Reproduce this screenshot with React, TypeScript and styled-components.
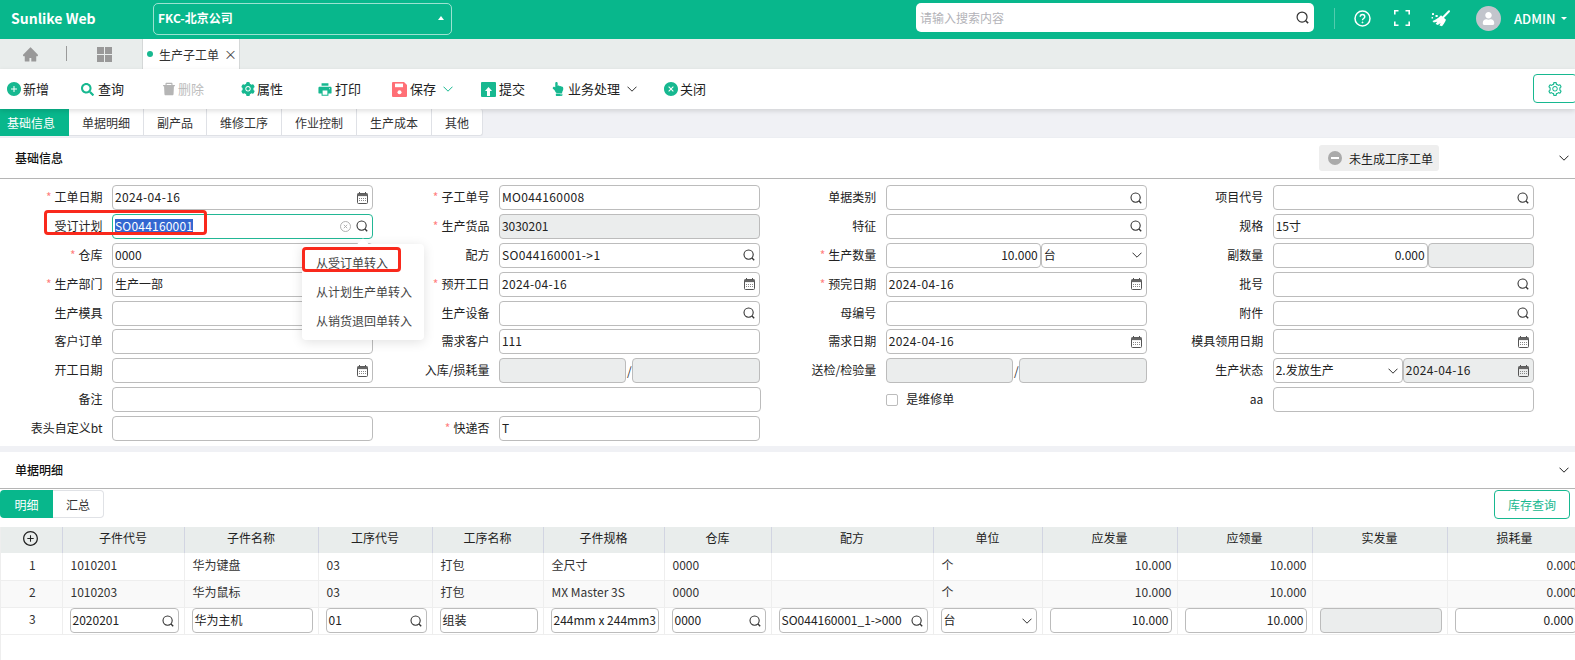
import React from "react";
import styled, { createGlobalStyle } from "styled-components";
import { AiFillHome, AiFillPlusCircle, AiFillDelete, AiFillSetting, AiFillPrinter, AiFillCloseCircle, AiOutlinePlusCircle, AiOutlineSetting } from "react-icons/ai";
import { FaHandPointUp, FaSearch, FaUser } from "react-icons/fa";

const TEAL = "#08b78c";
const ICON_TEAL = "#17b890";

const Global = createGlobalStyle`
  html, body { margin: 0; padding: 0; background: #fff; }
  body { font-family: "Noto Sans CJK SC", "Noto Sans", sans-serif; font-size: 12px; color: #222; }
  * { box-sizing: border-box; }
`;

const Page = styled.div`
  position: relative;
  width: 1575px;
  height: 660px;
  overflow: hidden;
  background: #fff;
`;

/* ---------- top bar ---------- */
const TopBar = styled.header`
  height: 39px;
  background: ${TEAL};
  display: flex;
  align-items: center;
  padding-left: 11px;
  color: #fff;
`;
const Brand = styled.div`
  width: 142px;
  font-size: 14px;
  font-weight: 700;
  line-height: 20px;
  margin-top: -3px;
`;
const Company = styled.div`
  width: 299px;
  height: 32px;
  margin-top: -2px;
  border: 1px solid rgba(255, 255, 255, 0.6);
  border-radius: 5px;
  display: flex;
  align-items: center;
  justify-content: space-between;
  padding: 0 7px 2px 4px;
  font-weight: 700;
  font-size: 12px;
`;
const CaretUp = styled.span`
  width: 0;
  height: 0;
  border-left: 3.5px solid transparent;
  border-right: 3.5px solid transparent;
  border-bottom: 4px solid #fff;
`;
const CaretDown = styled.span`
  width: 0;
  height: 0;
  border-left: 3px solid transparent;
  border-right: 3px solid transparent;
  border-top: 3.5px solid #fff;
  margin-left: 5px;
`;
const TopSearch = styled.div`
  width: 398px;
  height: 29px;
  margin: -4px 0 0 464px;
  background: #fff;
  border-radius: 5px;
  display: flex;
  align-items: center;
  justify-content: space-between;
  padding: 0 5px 0 4px;
  color: #b3b3b8;
  font-size: 12px;
`;
const TopDivider = styled.span`
  width: 1px;
  height: 21px;
  margin: -3px 8.5px 0 19.5px;
  background: rgba(255, 255, 255, 0.3);
`;
const TopSlot = styled.span`
  width: 39px;
  display: flex;
  justify-content: center;
  align-items: center;
  margin-top: -3px;
`;
const Avatar = styled.span`
  width: 25px;
  height: 25px;
  margin: -3px 0 0 16px;
  border-radius: 50%;
  background: #c2c5cc;
  display: flex;
  align-items: flex-end;
  justify-content: center;
  padding-bottom: 6px;
  color: #fff;
`;
const UserName = styled.span`
  margin: -3px 0 0 13px;
  font-size: 13px;
  font-weight: 500;
  display: flex;
  align-items: center;
`;

/* ---------- page tabs ---------- */
const PageTabs = styled.nav`
  height: 30px;
  background: #e9edec;
  display: flex;
  align-items: stretch;
`;
const HomeSlot = styled.span`
  width: 67px;
  display: flex;
  align-items: center;
  justify-content: center;
  padding-right: 7px;
  color: #999;
  position: relative;
  &::after {
    content: "";
    position: absolute;
    right: 0;
    top: 7px;
    height: 15px;
    width: 1px;
    background: #9a9a9a;
  }
`;
const GridSlot = styled.span`
  width: 75px;
  display: flex;
  align-items: center;
  justify-content: center;
`;
const PageTab = styled.div`
  width: 98px;
  background: #fff;
  border-left: 1px solid #d5d8d8;
  border-right: 1px solid #d5d8d8;
  display: flex;
  align-items: center;
  padding-left: 4px;
  font-size: 12px;
  color: #333;
`;
const Dot = styled.span`
  width: 6px;
  height: 6px;
  border-radius: 50%;
  background: ${ICON_TEAL};
  margin-right: 6px;
`;
const TabClose = styled.span`
  margin-left: 5px;
  font-size: 13px;
  color: #444;
  line-height: 14px;
`;

/* ---------- toolbar ---------- */
const Toolbar = styled.div`
  height: 40px;
  background: #fff;
  display: flex;
  align-items: center;
  padding-left: 6px;
  position: relative;
  z-index: 2;
  box-shadow: 0 2px 5px rgba(0, 0, 0, 0.13);
`;
const ToolItem = styled.div<{ $w: number; $off?: boolean }>`
  width: ${(p) => p.$w}px;
  display: flex;
  align-items: center;
  font-size: 13px;
  line-height: 18px;
  color: ${(p) => (p.$off ? "#bdbdbd" : "#222")};
`;
const ToolIcon = styled.span<{ $c?: string; $gap?: number }>`
  width: 16px;
  height: 16px;
  margin-right: ${(p) => p.$gap ?? 1}px;
  display: flex;
  align-items: center;
  justify-content: flex-start;
  color: ${(p) => p.$c || ICON_TEAL};
`;
const ChevronWrap = styled.span<{ $c: string }>`
  display: flex;
  margin-left: 7px;
  color: ${(p) => p.$c};
`;
const GearButton = styled.div`
  position: absolute;
  right: -2px;
  top: 5px;
  width: 44px;
  height: 29px;
  border: 1px solid ${ICON_TEAL};
  border-radius: 4px;
  display: flex;
  align-items: center;
  justify-content: center;
  color: ${ICON_TEAL};
`;

/* ---------- section tabs ---------- */
const SectionTabs = styled.div`
  height: 29px;
  background: #f0f1f5;
  display: flex;
  padding-bottom: 1px;
  border-bottom: 1px solid #eceef2;
`;
const SectionTab = styled.div<{ $on?: boolean; $last?: boolean }>`
  padding: ${(p) => (p.$on ? "0 14px 0 7px" : "0 13px")};
  display: flex;
  align-items: center;
  background: ${(p) => (p.$on ? TEAL : "#fff")};
  color: ${(p) => (p.$on ? "#fff" : "#333")};
  border-right: ${(p) => (p.$on ? "0" : "1px solid #dfe1e6")};
  border-bottom: ${(p) => (p.$on ? "0" : "1px solid #dfe1e6")};
  border-radius: ${(p) => (p.$last ? "0 3px 3px 0" : "0")};
  font-size: 12px;
`;

/* ---------- sections ---------- */
const SectionHead = styled.div<{ $h: number }>`
  height: ${(p) => p.$h}px;
  display: flex;
  align-items: center;
  padding-left: 15px;
  border-bottom: 1px solid #b5b5b5;
  background: #fff;
`;
const SectionTitle = styled.div`
  font-size: 12px;
  font-weight: 500;
  color: #111;
  flex: 1;
  margin-top: -2px;
`;
const StatusBadge = styled.div`
  width: 120px;
  height: 26px;
  background: #eeeeee;
  border-radius: 3px;
  display: flex;
  align-items: center;
  padding-left: 9px;
  margin-right: 136px;
  font-size: 12px;
  color: #222;
`;
const MinusDot = styled.span`
  width: 14px;
  height: 14px;
  border-radius: 50%;
  background: #aaa;
  margin-right: 7px;
  display: flex;
  align-items: center;
  justify-content: center;
  &::after {
    content: "";
    width: 8px;
    height: 2px;
    background: #fff;
  }
`;
const CollapseWrap = styled.span`
  position: absolute;
  left: 1559px;
  display: flex;
  color: #222;
`;

/* ---------- form ---------- */
const FormGrid = styled.div`
  display: grid;
  grid-template-columns: repeat(4, 386.9px);
  grid-auto-rows: 25px;
  row-gap: 3.9px;
  padding: 6px 0 5px;
  background: #fff;
`;
const FieldBox = styled.div<{ $span?: number }>`
  display: flex;
  align-items: center;
  grid-column: span ${(p) => p.$span || 1};
`;
const FieldLabel = styled.div`
  width: 102.5px;
  margin: -2px 9.5px 0 0;
  text-align: right;
  font-size: 12px;
  color: #222;
  white-space: nowrap;
`;
const Req = styled.span`
  color: #ff7f7f;
  margin-right: 3px;
`;
const Controls = styled.div<{ $w: number }>`
  width: ${(p) => p.$w}px;
  height: 25px;
  display: flex;
  align-items: center;
`;
const Shell = styled.div<{ $off?: boolean; $focus?: boolean; $right?: boolean; $w?: number }>`
  ${(p) => (p.$w ? `width:${p.$w}px;flex:none;` : "flex:1;min-width:0;")}
  height: 25px;
  border: 1px solid ${(p) => (p.$focus ? "#22b795" : "#bcbcbc")};
  border-radius: 4px;
  background: ${(p) => (p.$off ? "#ebeded" : "#fff")};
  display: flex;
  align-items: center;
  justify-content: ${(p) => (p.$right ? "flex-end" : "space-between")};
  padding: ${(p) => (p.$right ? "0 2px 2px 3px" : "0 4px 2px 2px")};
  font-size: 12px;
  color: #222;
  white-space: nowrap;
  overflow: hidden;
`;
const Value = styled.span<{ $wide?: boolean }>`
  letter-spacing: ${(p) => (p.$wide ? "0.36px" : "0")};
`;
const Slash = styled.span`
  width: 6px;
  text-align: center;
  color: #333;
  font-size: 12px;
`;
const Selected = styled.span`
  background: #3367d1;
  color: #fff;
  line-height: 13px;
  letter-spacing: 0.2px;
`;
const IconRow = styled.span`
  display: flex;
  align-items: center;
  gap: 5px;
  color: #333;
  margin-top: 2px;
`;
const CheckLine = styled.div`
  display: flex;
  align-items: center;
  padding-left: 112.5px;
  font-size: 12px;
  color: #222;
`;
const CheckText = styled.span`
  margin-top: -2px;
`;
const Check = styled.span`
  width: 12px;
  height: 12px;
  border: 1px solid #bcbcbc;
  border-radius: 2px;
  margin-right: 8px;
`;
const SectionGap = styled.div`
  height: 6px;
  background: #f0f1f5;
`;

/* ---------- detail ---------- */
const DetailBar = styled.div`
  height: 38px;
  padding-top: 1px;
  display: flex;
  justify-content: space-between;
  background: #fff;
`;
const DetailTabs = styled.div`
  display: flex;
  height: 28px;
`;
const DetailTab = styled.div<{ $on?: boolean }>`
  width: ${(p) => (p.$on ? 53 : 51)}px;
  display: flex;
  align-items: center;
  justify-content: center;
  font-size: 12px;
  background: ${(p) => (p.$on ? TEAL : "#fff")};
  color: ${(p) => (p.$on ? "#fff" : "#333")};
  border: ${(p) => (p.$on ? "0" : "1px solid #e0e2e6")};
  border-left: 0;
  border-radius: ${(p) => (p.$on ? "4px 0 0 4px" : "0 4px 4px 0")};
`;
const StockButton = styled.div`
  width: 76px;
  height: 29px;
  margin-right: 5px;
  border: 1px solid ${ICON_TEAL};
  border-radius: 4px;
  display: flex;
  align-items: center;
  justify-content: center;
  color: ${ICON_TEAL};
  font-size: 12px;
`;
const TableWrap = styled.div`
  height: 133px;
  overflow: hidden;
  border-left: 1px solid #eeeeee;
`;
const Table = styled.table`
  table-layout: fixed;
  width: 1581px;
  margin-left: -1px;
  border-collapse: collapse;
  font-size: 12px;
`;
const Th = styled.th`
  height: 26px;
  padding: 0 0 5px;
  background: #e9edec;
  font-weight: 400;
  color: #222;
  text-align: center;
  border-right: 1px solid #d2d5e2;
`;
const PlusHead = styled(Th)`
  padding: 0 0 3px;
  line-height: 0;
`;
const Tr = styled.tr<{ $alt?: boolean }>`
  background: ${(p) => (p.$alt ? "#f9f9f9" : "#fff")};
`;
const Td = styled.td<{ $align?: string; $input?: boolean }>`
  height: 27px;
  padding: ${(p) => (p.$input ? "0 5px 0 7px" : "0 5px 4px 8px")};
  text-align: ${(p) => p.$align || "left"};
  color: #333;
  white-space: nowrap;
  overflow: hidden;
  border-right: 1px solid #eeeeee;
  border-bottom: 1px solid #eeeeee;
`;

/* ---------- overlays ---------- */
const Menu = styled.div`
  position: absolute;
  left: 302px;
  top: 244px;
  width: 122px;
  height: 96px;
  padding-top: 3.5px;
  background: #fff;
  border-radius: 4px;
  box-shadow: 0 2px 12px rgba(0, 0, 0, 0.12);
  z-index: 4;
  &::before {
    content: "";
    position: absolute;
    left: 57px;
    top: -4px;
    width: 8px;
    height: 8px;
    background: #fff;
    transform: rotate(45deg);
  }
`;
const MenuItem = styled.div`
  position: relative;
  height: 29px;
  line-height: 29px;
  padding-left: 14px;
  font-size: 12px;
  color: #444;
`;
const RedBox = styled.div<{ $x: number; $y: number; $w: number; $h: number }>`
  position: absolute;
  left: ${(p) => p.$x}px;
  top: ${(p) => p.$y}px;
  width: ${(p) => p.$w}px;
  height: ${(p) => p.$h}px;
  border: 3px solid #f9291c;
  border-radius: 4px;
  z-index: 5;
`;

/* ---------- icons ---------- */
const SearchGlyph = ({ s = 12 }: { s?: number }) => (
  <svg width={s} height={s} viewBox="0 0 12 12" fill="none" stroke="#333" strokeWidth="1.1">
    <circle cx="5.6" cy="5.6" r="4.6" />
    <path d="M9 9l2.2 2.2" strokeWidth="1.4" />
  </svg>
);
const CalGlyph = () => (
  <svg width="11" height="12" viewBox="0 0 11 12" fill="none">
    <rect x="0.5" y="1.5" width="10" height="10" rx="1" stroke="#555" />
    <rect x="0.5" y="1.5" width="10" height="2.6" fill="#666" />
    <path d="M2.5 0v2M8.5 0v2" stroke="#555" />
    <path d="M2 6.5h7M2 8.5h7" stroke="#888" strokeDasharray="1 1" />
  </svg>
);
const ClearGlyph = () => (
  <svg width="11" height="11" viewBox="0 0 11 11" fill="none" stroke="#a8a8a8" strokeWidth="0.9">
    <circle cx="5.5" cy="5.5" r="5" />
    <path d="M3.8 3.8l3.4 3.4M7.2 3.8l-3.4 3.4" />
  </svg>
);
const Chevron = ({ s = 10 }: { s?: number }) => (
  <svg width={s} height={(s * 6) / 10} viewBox="0 0 10 6" fill="none" stroke="currentColor" strokeWidth="1">
    <path d="M0.5 0.7L5 5.2 9.5 0.7" />
  </svg>
);
const AppsGlyph = () => (
  <svg width="15" height="15" viewBox="0 0 15 15" fill="#999">
    <rect width="7" height="7" />
    <rect x="8" width="7" height="7" />
    <rect y="8" width="7" height="7" />
    <rect x="8" y="8" width="7" height="7" />
  </svg>
);
const SaveGlyph = () => (
  <svg width="15" height="15" viewBox="0 0 15 15">
    <path d="M1 0h11l3 3v11a1 1 0 0 1-1 1H1a1 1 0 0 1-1-1V1a1 1 0 0 1 1-1z" fill="#ff6f76" />
    <rect x="3" y="1.6" width="8" height="3.6" fill="#fff" />
    <circle cx="7.5" cy="10.2" r="2" fill="#fff" />
  </svg>
);
const SubmitGlyph = () => (
  <svg width="15" height="15" viewBox="0 0 15 15">
    <rect width="15" height="15" rx="1" fill={ICON_TEAL} />
    <path d="M7.5 5L11 9H9v5H6V9H4z" fill="#fff" />
  </svg>
);
const HelpGlyph = () => (
  <svg width="17" height="17" viewBox="0 0 17 17" fill="none" stroke="#fff">
    <circle cx="8.5" cy="8.5" r="7.5" strokeWidth="1.5" />
    <path d="M6.2 6.8c0-3 4.6-3 4.6 0 0 1.8-2.3 1.7-2.3 3.4" strokeWidth="1.4" />
    <circle cx="8.5" cy="12.4" r="0.5" fill="#fff" />
  </svg>
);
const FullGlyph = () => (
  <svg width="16" height="16" viewBox="0 0 16 16" fill="none" stroke="#fff" strokeWidth="1.6">
    <path d="M.8 4.5V.8h3.7M11.5.8h3.7v3.7M15.2 11.5v3.7h-3.7M4.5 15.2H.8v-3.7" />
  </svg>
);
const BroomGlyph = () => (
  <svg width="20" height="17" viewBox="0 0 20 17" fill="#fff">
    <path d="M12.2 7.2L18 1.2" stroke="#fff" strokeWidth="2" strokeLinecap="round" />
    <path d="M10 5.2l5 4.6-.8 1.6c-.8 1.8-2 3.4-3.2 4.8l-2.6-.6 1.2-2.6-2.8 2.1-2.2-1 1.6-2.4-3.4.9-1.4-1.7C3.8 10.300 7 8.400 10 5.200z" />
    <rect x="1" y="3" width="2" height="2" rx="0.6" />
    <rect x="4.500" y="5" width="2.200" height="2" rx="0.6" />
    <rect x="0.500" y="7" width="1.600" height="1.600" rx="0.5" />
  </svg>
);

type Ctl = "search" | "date" | "select" | "none";
const Trail = ({ k }: { k: Ctl }) =>
  k === "search" ? (
    <IconRow><SearchGlyph /></IconRow>
  ) : k === "date" ? (
    <IconRow><CalGlyph /></IconRow>
  ) : k === "select" ? (
    <IconRow><Chevron /></IconRow>
  ) : null;

const Input = ({ v = "", k = "none", off, wide }: { v?: string; k?: Ctl; off?: boolean; wide?: boolean }) => (
  <Shell $off={off}>
    <Value $wide={wide}>{v}</Value>
    <Trail k={k} />
  </Shell>
);

const Field = ({ label, req, span, w = 261, children }: { label: string; req?: boolean; span?: number; w?: number; children: React.ReactNode }) => (
  <FieldBox $span={span}>
    <FieldLabel>
      {req && <Req>*</Req>}
      {label}
    </FieldLabel>
    <Controls $w={w}>{children}</Controls>
  </FieldBox>
);

const tools = [
  { w: 75, icon: <AiFillPlusCircle size={16} />, t: "新增" },
  { w: 80, icon: <FaSearch size={13} />, t: "查询" },
  { w: 79, icon: <AiFillDelete size={16} />, t: "删除", off: true, c: "#b5b5b5" },
  { w: 77, icon: <AiFillSetting size={16} />, t: "属性" },
  { w: 75, icon: <AiFillPrinter size={17} />, t: "打印", gap: 2 },
  { w: 89, icon: <SaveGlyph />, t: "保存", chev: ICON_TEAL, gap: 2 },
  { w: 70, icon: <SubmitGlyph />, t: "提交", gap: 2 },
  { w: 112, icon: <FaHandPointUp size={14} />, t: "业务处理", chev: "#333" },
  { w: 60, icon: <AiFillCloseCircle size={16} />, t: "关闭" },
];

const colWidths = [62, 122, 134, 114, 111, 121, 107, 162, 109, 135, 135, 135, 135];
const heads = ["子件代号", "子件名称", "工序代号", "工序名称", "子件规格", "仓库", "配方", "单位", "应发量", "应领量", "实发量", "损耗量"];
const rows = [
  ["1", "1010201", "华为键盘", "03", "打包", "全尺寸", "0000", "", "个", "10.000", "10.000", "", "0.000"],
  ["2", "1010203", "华为鼠标", "03", "打包", "MX Master 3S", "0000", "", "个", "10.000", "10.000", "", "0.000"],
];

export default function App() {
  return (
    <Page>
      <Global />
      <TopBar>
        <Brand>Sunlike Web</Brand>
        <Company>
          FKC-北京公司
          <CaretUp />
        </Company>
        <TopSearch>
          请输入搜索内容
          <SearchGlyph s={13} />
        </TopSearch>
        <TopDivider />
        <TopSlot><HelpGlyph /></TopSlot>
        <TopSlot><FullGlyph /></TopSlot>
        <TopSlot><BroomGlyph /></TopSlot>
        <Avatar><FaUser size={13} /></Avatar>
        <UserName>ADMIN<CaretDown /></UserName>
      </TopBar>

      <PageTabs>
        <HomeSlot><AiFillHome size={17} /></HomeSlot>
        <GridSlot><AppsGlyph /></GridSlot>
        <PageTab>
          <Dot />生产子工单<TabClose>×</TabClose>
        </PageTab>
      </PageTabs>

      <Toolbar>
        {tools.map((x) => (
          <ToolItem key={x.t} $w={x.w} $off={x.off}>
            <ToolIcon $c={x.c} $gap={x.gap}>{x.icon}</ToolIcon>
            {x.t}
            {x.chev && <ChevronWrap $c={x.chev}><Chevron /></ChevronWrap>}
          </ToolItem>
        ))}
        <GearButton><AiOutlineSetting size={16} /></GearButton>
      </Toolbar>

      <SectionTabs>
        <SectionTab $on>基础信息</SectionTab>
        <SectionTab>单据明细</SectionTab>
        <SectionTab>副产品</SectionTab>
        <SectionTab>维修工序</SectionTab>
        <SectionTab>作业控制</SectionTab>
        <SectionTab>生产成本</SectionTab>
        <SectionTab $last>其他</SectionTab>
      </SectionTabs>

      <SectionHead $h={41}>
        <SectionTitle>基础信息</SectionTitle>
        <StatusBadge><MinusDot />未生成工序工单</StatusBadge>
        <CollapseWrap><Chevron /></CollapseWrap>
      </SectionHead>

      <FormGrid>
        <Field label="工单日期" req><Input wide v="2024-04-16" k="date" /></Field>
        <Field label="子工单号" req><Input wide v="MO044160008" /></Field>
        <Field label="单据类别"><Input k="search" /></Field>
        <Field label="项目代号"><Input k="search" /></Field>

        <Field label="受订计划">
          <Shell $focus>
            <Selected>SO044160001</Selected>
            <IconRow><ClearGlyph /><SearchGlyph /></IconRow>
          </Shell>
        </Field>
        <Field label="生产货品" req><Input v="3030201" off /></Field>
        <Field label="特征"><Input k="search" /></Field>
        <Field label="规格"><Input v="15寸" /></Field>

        <Field label="仓库" req><Input v="0000" /></Field>
        <Field label="配方"><Input wide v="SO044160001->1" k="search" /></Field>
        <Field label="生产数量" req>
          <Shell $right $w={155}>10.000</Shell>
          <Input v="台" k="select" />
        </Field>
        <Field label="副数量">
          <Shell $right $w={155}>0.000</Shell>
          <Input off />
        </Field>

        <Field label="生产部门" req><Input v="生产一部" /></Field>
        <Field label="预开工日" req><Input wide v="2024-04-16" k="date" /></Field>
        <Field label="预完日期" req><Input wide v="2024-04-16" k="date" /></Field>
        <Field label="批号"><Input k="search" /></Field>

        <Field label="生产模具"><Input /></Field>
        <Field label="生产设备"><Input k="search" /></Field>
        <Field label="母编号"><Input /></Field>
        <Field label="附件"><Input k="search" /></Field>

        <Field label="客户订单"><Input /></Field>
        <Field label="需求客户"><Input v="111" /></Field>
        <Field label="需求日期"><Input wide v="2024-04-16" k="date" /></Field>
        <Field label="模具领用日期"><Input k="date" /></Field>

        <Field label="开工日期"><Input k="date" /></Field>
        <Field label="入库/损耗量">
          <Input off /><Slash>/</Slash><Input off />
        </Field>
        <Field label="送检/检验量">
          <Input off /><Slash>/</Slash><Input off />
        </Field>
        <Field label="生产状态">
          <Shell $w={130}><span>2.发放生产</span><Trail k="select" /></Shell>
          <Input wide v="2024-04-16" k="date" off />
        </Field>

        <Field label="备注" span={2} w={648.5}><Input /></Field>
        <CheckLine><Check /><CheckText>是维修单</CheckText></CheckLine>
        <Field label="aa"><Input /></Field>

        <Field label="表头自定义bt"><Input /></Field>
        <Field label="快递否" req><Input v="T" /></Field>
      </FormGrid>

      <SectionGap />

      <SectionHead $h={37}>
        <SectionTitle>单据明细</SectionTitle>
        <CollapseWrap><Chevron /></CollapseWrap>
      </SectionHead>

      <DetailBar>
        <DetailTabs>
          <DetailTab $on>明细</DetailTab>
          <DetailTab>汇总</DetailTab>
        </DetailTabs>
        <StockButton>库存查询</StockButton>
      </DetailBar>

      <TableWrap>
        <Table>
          <colgroup>
            {colWidths.map((w, i) => <col key={i} width={w} />)}
          </colgroup>
          <thead>
            <tr>
              <PlusHead><AiOutlinePlusCircle size={17} color="#222" /></PlusHead>
              {heads.map((h) => <Th key={h}>{h}</Th>)}
            </tr>
          </thead>
          <tbody>
            {rows.map((r, ri) => (
              <Tr key={r[0]} $alt={ri === 1}>
                {r.map((c, i) => (
                  <Td key={i} $align={i === 0 ? "center" : i >= 9 ? "right" : "left"}>{c}</Td>
                ))}
              </Tr>
            ))}
            <Tr>
              <Td $align="center">3</Td>
              <Td $input><Input v="2020201" k="search" /></Td>
              <Td $input><Input v="华为主机" /></Td>
              <Td $input><Input v="01" k="search" /></Td>
              <Td $input><Input v="组装" /></Td>
              <Td $input><Input v="244mm x 244mm3" /></Td>
              <Td $input><Input v="0000" k="search" /></Td>
              <Td $input><Input v="SO044160001_1->000" k="search" /></Td>
              <Td $input><Input v="台" k="select" /></Td>
              <Td $input><Shell $right>10.000</Shell></Td>
              <Td $input><Shell $right>10.000</Shell></Td>
              <Td $input><Input off /></Td>
              <Td $input><Shell $right>0.000</Shell></Td>
            </Tr>
          </tbody>
        </Table>
      </TableWrap>

      <RedBox $x={44} $y={210} $w={163} $h={25} />
      <Menu>
        <MenuItem>从受订单转入</MenuItem>
        <MenuItem>从计划生产单转入</MenuItem>
        <MenuItem>从销货退回单转入</MenuItem>
      </Menu>
      <RedBox $x={302} $y={247} $w={99} $h={25} />
    </Page>
  );
}
